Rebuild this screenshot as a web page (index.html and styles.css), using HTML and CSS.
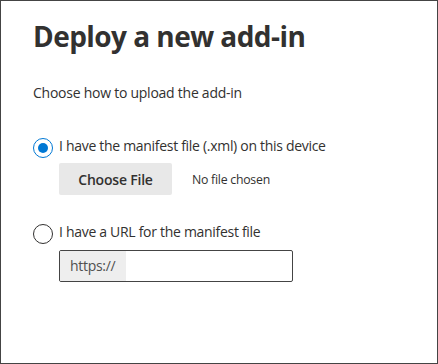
FILE: index.html
```html
<!DOCTYPE html>
<html lang="en">
<head>
<meta charset="utf-8">
<title>Deploy a new add-in</title>
<link rel="stylesheet" href="styles.css">
</head>
<body>
<div class="panel">
  <h1 class="title">Deploy a new add-in</h1>
  <div class="subhead">Choose how to upload the add-in</div>
  <div class="option option-file">
    <span class="radio radio-checked"><span class="dot"></span></span>
    <span class="label">I have the manifest file (.xml) on this device</span>
  </div>
  <div class="file-row">
    <span class="file-button">Choose File</span>
    <span class="file-name">No file chosen</span>
  </div>
  <div class="option option-url">
    <span class="radio"></span>
    <span class="label">I have a URL for the manifest file</span>
  </div>
  <div class="url-field">
    <span class="url-prefix">https://</span>
    <span class="url-input"></span>
  </div>
</div>
</body>
</html>
```
FILE: styles.css
```css
html, body {
  margin: 0;
  padding: 0;
  background: #ffffff;
}
.panel {
  box-sizing: border-box;
  width: 438px;
  height: 364px;
  border: 1px solid #444444;
  padding: 17px 0 0 32px;
  font-family: "Open Sans", "Noto Sans", sans-serif;
  color: #323130;
  display: flex;
  flex-direction: column;
  align-items: flex-start;
}
.title {
  margin: 0;
  font-size: 28px;
  line-height: 36px;
  font-weight: 700;
  letter-spacing: -0.55px;
}
.subhead {
  margin-top: 29px;
  font-size: 14px;
  line-height: 20px;
  font-weight: 500;
  letter-spacing: -0.25px;
}
.option {
  display: flex;
  align-items: flex-start;
  gap: 6px;
}
.option-file {
  margin-top: 33px;
}
.option-url {
  margin-top: 27px;
}
.radio {
  box-sizing: border-box;
  width: 20px;
  height: 20px;
  margin-top: 2px;
  border: 1px solid #323130;
  border-radius: 50%;
  display: flex;
  align-items: center;
  justify-content: center;
  flex: none;
}
.radio-checked {
  border-color: #0078d4;
}
.dot {
  width: 10px;
  height: 10px;
  border-radius: 50%;
  background: #0078d4;
}
.label {
  font-size: 14px;
  line-height: 20px;
  letter-spacing: -0.3px;
}
.file-row {
  margin: 5px 0 0 26px;
  display: flex;
  align-items: center;
  gap: 20px;
}
.file-button {
  box-sizing: border-box;
  width: 113px;
  height: 32px;
  border-radius: 2px;
  background: #e8e8e8;
  font-size: 14px;
  font-weight: 600;
  letter-spacing: -0.2px;
  display: flex;
  align-items: center;
  justify-content: center;
}
.file-name {
  font-size: 12.3px;
  letter-spacing: -0.25px;
}
.url-field {
  box-sizing: border-box;
  margin: 6px 0 0 26px;
  width: 234px;
  height: 32px;
  border: 1px solid #444444;
  border-radius: 2px;
  display: flex;
  overflow: hidden;
}
.url-prefix {
  width: 66px;
  padding-left: 10px;
  box-sizing: border-box;
  background: #eeeeee;
  font-size: 14px;
  line-height: 30px;
  color: #505050;
  letter-spacing: -0.3px;
}
.url-input {
  flex: 1;
}
```
